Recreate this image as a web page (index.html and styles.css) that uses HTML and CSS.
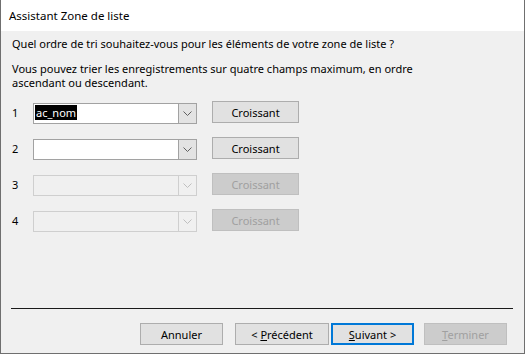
FILE: index.html
```html
<!DOCTYPE html>
<html lang="fr">
<head>
  <meta charset="UTF-8" />
  <title>Assistant Zone de liste</title>
  <link rel="stylesheet" href="styles.css">
</head>
<body>
  <div class="window">
    <div class="titlebar">Assistant Zone de liste</div>

    <div class="content">
      <p class="question">Quel ordre de tri souhaitez-vous pour les éléments de votre zone de liste ?</p>
      <p class="hint">Vous pouvez trier les enregistrements sur quatre champs maximum, en ordre<br>ascendant ou descendant.</p>

      <div class="sort-list">
        <div class="sort-row">
          <span class="num">1</span>
          <div class="combo">
            <span class="combo-value"><span class="selected">ac_nom</span></span>
            <span class="combo-arrow"><svg width="9" height="5" viewBox="0 0 9 5"><path d="M0.5 0.5 L4.5 4.5 L8.5 0.5" fill="none" stroke="#606060" stroke-width="1"/></svg></span>
          </div>
          <button class="btn">Croissant</button>
        </div>
        <div class="sort-row">
          <span class="num">2</span>
          <div class="combo">
            <span class="combo-value"></span>
            <span class="combo-arrow"><svg width="9" height="5" viewBox="0 0 9 5"><path d="M0.5 0.5 L4.5 4.5 L8.5 0.5" fill="none" stroke="#606060" stroke-width="1"/></svg></span>
          </div>
          <button class="btn">Croissant</button>
        </div>
        <div class="sort-row">
          <span class="num">3</span>
          <div class="combo disabled">
            <span class="combo-value"></span>
            <span class="combo-arrow"><svg width="9" height="5" viewBox="0 0 9 5"><path d="M0.5 0.5 L4.5 4.5 L8.5 0.5" fill="none" stroke="#bfbfbf" stroke-width="1"/></svg></span>
          </div>
          <button class="btn" disabled>Croissant</button>
        </div>
        <div class="sort-row">
          <span class="num">4</span>
          <div class="combo disabled">
            <span class="combo-value"></span>
            <span class="combo-arrow"><svg width="9" height="5" viewBox="0 0 9 5"><path d="M0.5 0.5 L4.5 4.5 L8.5 0.5" fill="none" stroke="#bfbfbf" stroke-width="1"/></svg></span>
          </div>
          <button class="btn" disabled>Croissant</button>
        </div>
      </div>

      <div class="footer">
        <hr class="sep">
        <div class="footer-actions">
          <button class="btn">Annuler</button>
          <button class="btn btn-wide">&lt; <u>P</u>récédent</button>
          <button class="btn btn-default"><u>S</u>uivant &gt;</button>
          <button class="btn btn-last" disabled><u>T</u>erminer</button>
        </div>
      </div>
    </div>
  </div>
</body>
</html>
```

FILE: styles.css
```css
* { box-sizing: border-box; margin: 0; padding: 0; }
html, body { width: 525px; height: 354px; overflow: hidden; }
body { font-family: "Noto Sans", "Open Sans", sans-serif; font-size: 11px; color: #000; background: #fff; }

.window { width: 525px; height: 354px; display: flex; flex-direction: column; border: 1px solid #6f6f6f; border-top: none; }
.titlebar { height: 31px; background: #fff; padding-left: 8px; line-height: 32px; font-size: 11.5px; }

.content { flex: 1; background: #f0f0f0; padding: 5px 0 0 11px; display: flex; flex-direction: column; }
.question { line-height: 16px; }
.hint { margin-top: 10px; line-height: 14px; }

.sort-list { margin-top: 11px; display: flex; flex-direction: column; gap: 14px; }
.sort-row { display: flex; align-items: center; height: 22px; }
.num { width: 21px; }
.combo { width: 164px; height: 21px; margin-top: 2px; display: flex; border: 1px solid #a2a2a2; background: #fff; }
.combo-value { flex: 1; padding: 1px 0 0 1px; line-height: 15px; }
.selected { background: #000; color: #fff; display: inline-block; padding: 0 1px; }
.combo-arrow { width: 18px; display: flex; align-items: center; justify-content: center; background: #e3e3e3; border-left: 1px solid #a2a2a2; padding-top: 1px; }
.combo.disabled { background: #f0f0f0; border-color: #cfcfcf; }
.combo.disabled .combo-arrow { background: #f0f0f0; border-left-color: #cfcfcf; }

.btn { font-family: inherit; font-size: 11px; color: #000; width: 87px; height: 22px; background: #e1e1e1; border: 1px solid #adadad; margin-left: 15px; }
.btn:disabled { color: #a0a0a0; background: #cccccc; border-color: #bfbfbf; }
.btn u { text-decoration: underline; }

.footer { margin-top: auto; padding-bottom: 8px; }
.sep { border: none; border-top: 1px solid #1a1a1a; margin: 0 11px 14px -1px; }
.footer-actions { display: flex; justify-content: flex-end; padding-right: 17px; }
.footer-actions .btn { width: 83px; margin-left: 0; }
.footer-actions .btn-wide { width: 94px; margin-left: 12px; }
.footer-actions .btn-default { margin-left: 2px; border: 2px solid #0078d7; }
.footer-actions .btn-last { margin-left: 10px; }
```
